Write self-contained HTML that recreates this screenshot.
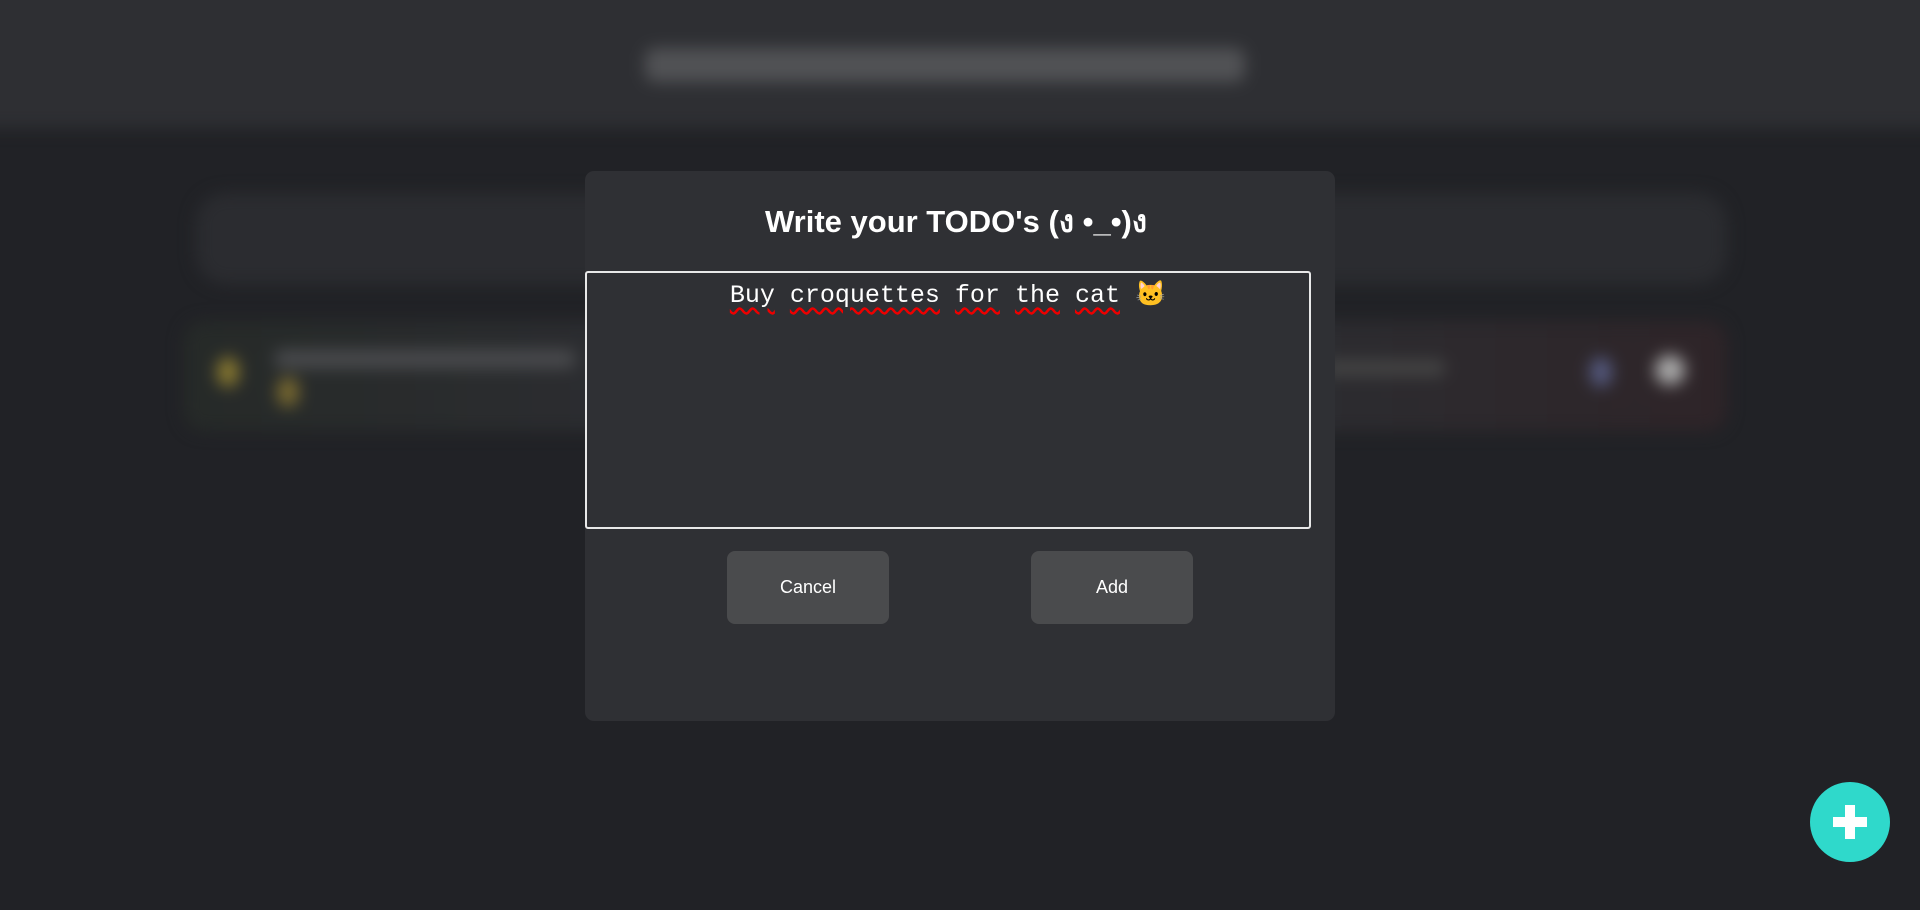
<!DOCTYPE html>
<html><head><meta charset="utf-8"><style>
html,body{margin:0;width:1920px;height:890px;overflow:hidden;background:#212226;font-family:"Liberation Sans",sans-serif;}
.bg{position:absolute;inset:-20px;filter:blur(8px);}
.bg>div{position:absolute;}
.hdr{left:0;top:0;width:1960px;height:148px;background:#2e2f33;}
.ht{left:665px;top:68px;width:600px;height:34px;background:#5a5b5e;border-radius:10px;opacity:.8;}
.c1{left:216px;top:213px;width:1531px;height:91px;background:#2b2c30;border-radius:30px;}
.c2{left:204px;top:341px;width:1543px;height:110px;background:linear-gradient(90deg,#262a28 0%,#2c2d31 30%,#2c2d31 70%,#2e2428 100%);border-radius:20px;}
.dot{width:22px;height:30px;border-radius:50%;}
.modal{position:absolute;left:585px;top:171px;width:750px;height:550px;background:#2f3034;border-radius:9px;}
h1{position:absolute;left:0;right:0;top:196px;margin:0;text-align:center;color:#fff;font-size:31px;font-weight:bold;padding-right:8px;}
.ta{position:absolute;left:585px;top:271px;width:722px;height:254px;border:2px solid #e8e8e8;border-radius:3px;background:#2f3034;}
.tx{position:absolute;left:585px;width:726px;top:280px;text-align:center;color:#fff;font-family:"Liberation Mono",monospace;font-size:25px;}
.tx span{text-decoration:underline wavy #e00;text-underline-offset:5px;}
.btn{position:absolute;top:551px;width:162px;height:73px;background:#4a4b4d;border-radius:8px;color:#fff;font-size:18px;line-height:73px;text-align:center;}
.fab{position:absolute;left:1810px;top:782px;width:80px;height:80px;border-radius:50%;background:#2fd9cb;}
.fab:before{content:"";position:absolute;left:23px;top:35px;width:34px;height:10px;background:#fff;}
.fab:after{content:"";position:absolute;left:35px;top:23px;width:10px;height:34px;background:#fff;}
</style></head><body>
<div class="bg"><div class="hdr"></div><div class="ht"></div><div class="c1"></div><div class="c2"></div>
<div class="dot" style="left:237px;top:377px;background:#8a7a30"></div>
<div class="dot" style="left:297px;top:397px;background:#7a6a30"></div>
<div style="left:295px;top:370px;width:300px;height:18px;background:#4a4b4e;border-radius:6px"></div>
<div style="left:1345px;top:380px;width:120px;height:16px;background:#444;border-radius:6px"></div>
<div class="dot" style="left:1610px;top:377px;background:#555a80"></div>
<div class="dot" style="left:1675px;top:375px;width:30px;background:#aaa"></div>
</div>
<div class="modal"></div>
<h1>Write your TODO's (ง •_•)ง</h1>
<div class="ta"></div>
<div class="tx"><span>Buy</span> <span>croquettes</span> <span>for</span> <span>the</span> <span>cat</span> 🐱</div>
<div class="btn" style="left:727px">Cancel</div>
<div class="btn" style="left:1031px">Add</div>
<div class="fab"></div>
</body></html>
